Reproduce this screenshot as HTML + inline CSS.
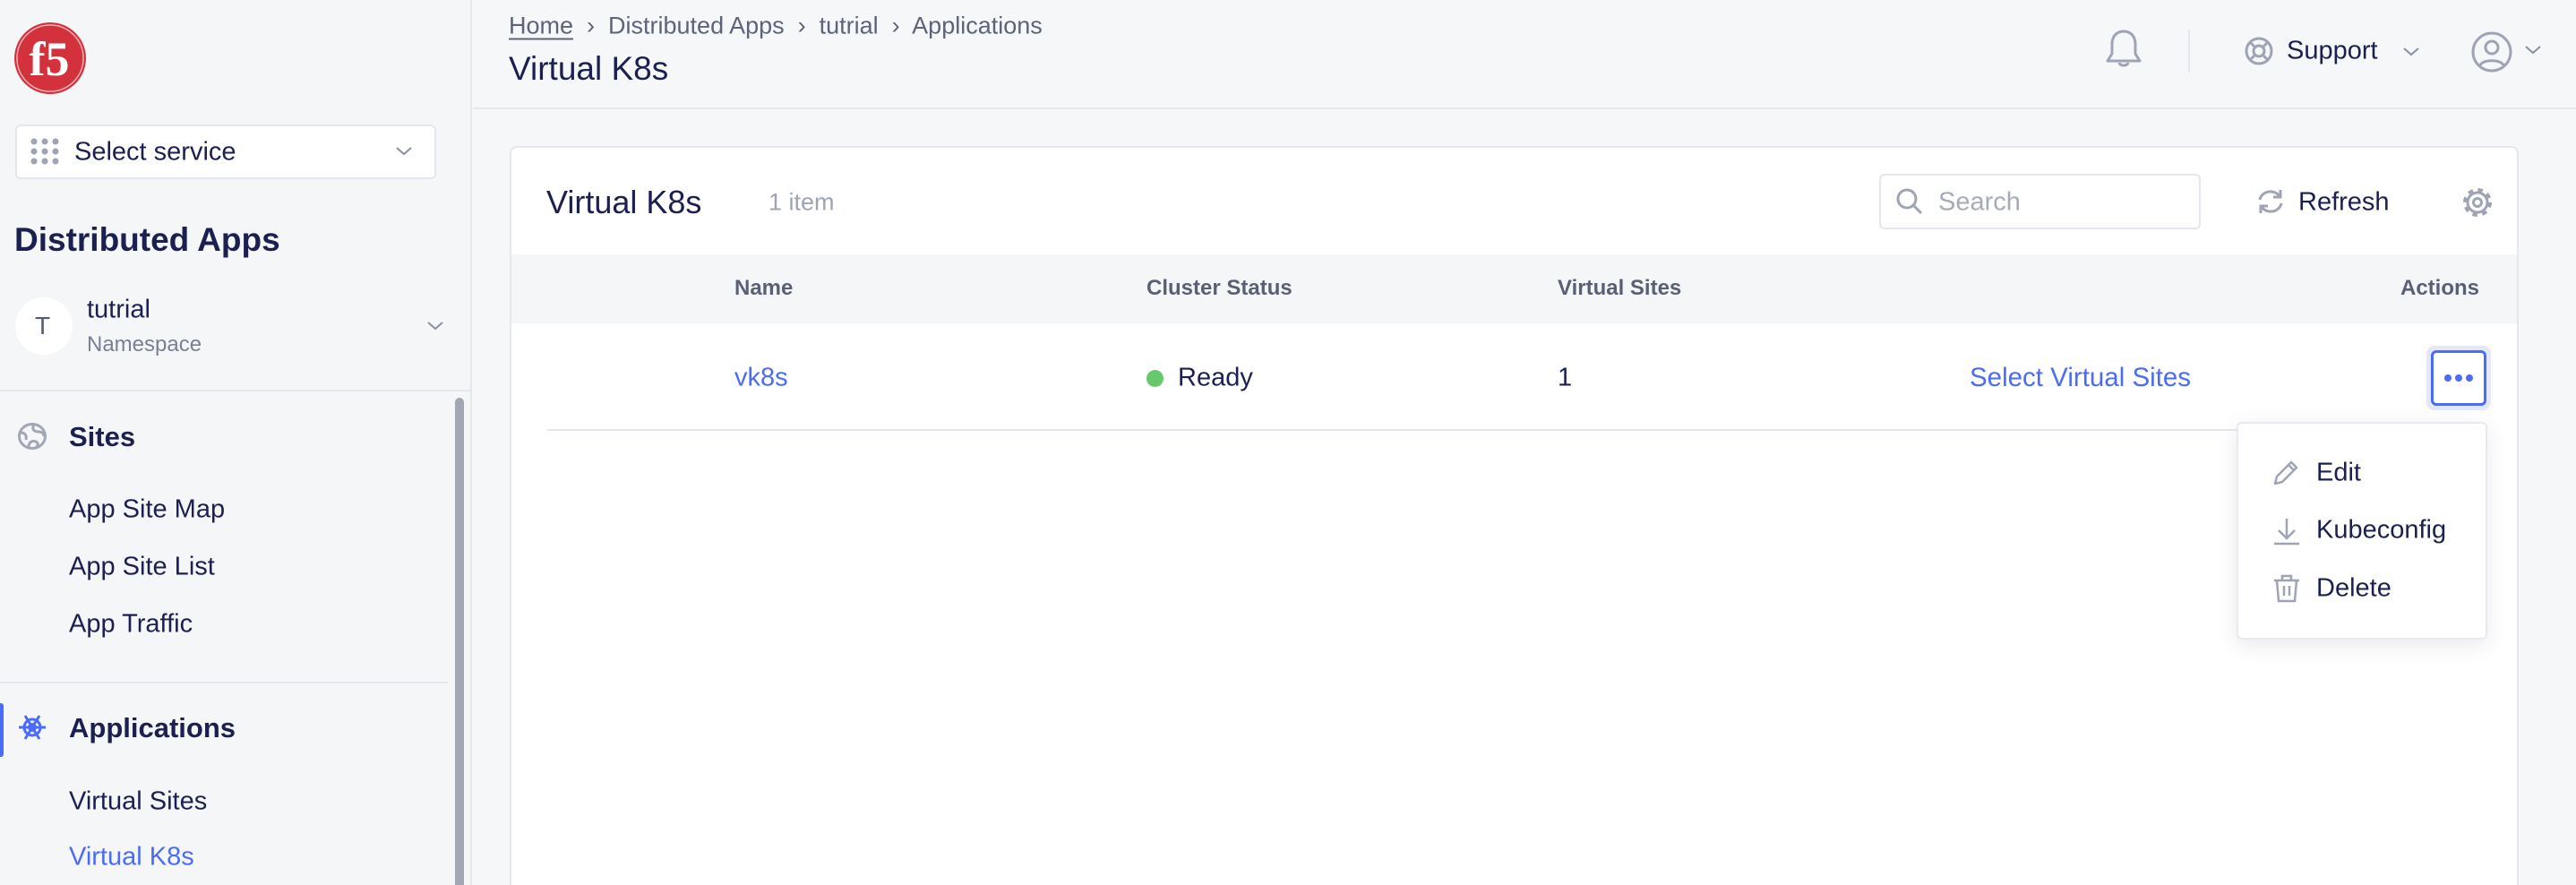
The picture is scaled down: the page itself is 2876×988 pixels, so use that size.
<!DOCTYPE html>
<html style="width:2876px;height:988px;overflow:hidden"><head><meta charset="utf-8"><style>
*{margin:0;padding:0;box-sizing:border-box}
body{width:2876px;height:988px;overflow:hidden;background:#f6f7f9;font-family:"Liberation Sans",sans-serif;color:#1b2050;position:relative}
.a{position:absolute;white-space:nowrap}
.vc{transform:translateY(-50%)}
svg{position:absolute;overflow:visible}
</style></head><body>
<!-- sidebar -->
<div class="a" style="left:0;top:0;width:527px;height:988px;background:#f5f6f8;border-right:2px solid #e6e8ee"></div>
<svg style="left:15px;top:24px" width="82" height="82" viewBox="0 0 82 82"><ellipse cx="41" cy="41" rx="40" ry="40" fill="#d3323c"/><ellipse cx="41" cy="41" rx="37" ry="37" fill="none" stroke="#fff" stroke-width="1.5" opacity=".6"/><text x="40" y="60" font-family="Liberation Serif" font-weight="bold" font-size="54" fill="#fff" text-anchor="middle">f5</text></svg>
<div class="a" style="left:17px;top:139px;width:470px;height:61px;background:#fff;border:2px solid #e4e7ee;border-radius:6px"></div>
<svg style="left:34px;top:154px" width="34" height="30"><g fill="#9ea4b4"><circle cx="4" cy="4" r="3.5"/><circle cx="16" cy="4" r="3.5"/><circle cx="28" cy="4" r="3.5"/><circle cx="4" cy="15" r="3.5"/><circle cx="16" cy="15" r="3.5"/><circle cx="28" cy="15" r="3.5"/><circle cx="4" cy="26" r="3.5"/><circle cx="16" cy="26" r="3.5"/><circle cx="28" cy="26" r="3.5"/></g></svg>
<div class="a vc" style="left:83px;top:170px;font-size:29px">Select service</div>
<svg style="left:442px;top:164px" width="18" height="10"><path d="M1 1l8 7 8-7" stroke="#8a90a2" stroke-width="2" fill="none"/></svg>
<div class="a vc" style="left:16px;top:268px;font-size:37px;font-weight:bold">Distributed Apps</div>
<div class="a" style="left:17px;top:332px;width:64px;height:64px;border-radius:50%;background:#fff"></div>
<div class="a vc" style="left:39px;top:364px;font-size:28px;color:#555b70">T</div>
<div class="a vc" style="left:97px;top:346px;font-size:29px">tutrial</div>
<div class="a vc" style="left:97px;top:385px;font-size:24px;color:#7a8094">Namespace</div>
<svg style="left:477px;top:359px" width="18" height="10"><path d="M1 1l8 7 8-7" stroke="#8a90a2" stroke-width="2" fill="none"/></svg>
<div class="a" style="left:0;top:435px;width:526px;height:2px;background:#e4e7ee"></div>
<div class="a" style="left:508px;top:444px;width:10px;height:560px;border-radius:5px;background:#a1a7b5"></div>
<svg style="left:20px;top:472px" width="32" height="30" viewBox="0 0 32 30"><ellipse cx="16" cy="15" rx="14.5" ry="13.5" stroke="#a1a7b5" stroke-width="3" fill="none"/><path d="M3 11c5 0 7 3 6 8M18 2c-3 5 0 8 5 8s6 3 6 5M12 27c0-5 4-8 8-6s2 6-1 7" stroke="#a1a7b5" stroke-width="3" fill="none"/></svg>
<div class="a vc" style="left:77px;top:488px;font-size:31px;font-weight:bold">Sites</div>
<div class="a vc" style="left:77px;top:569px;font-size:29px">App Site Map</div>
<div class="a vc" style="left:77px;top:633px;font-size:29px">App Site List</div>
<div class="a vc" style="left:77px;top:697px;font-size:29px">App Traffic</div>
<div class="a" style="left:0;top:761px;width:500px;height:2px;background:#e4e7ee"></div>
<div class="a" style="left:0;top:785px;width:4px;height:60px;background:#4a6cf7;border-radius:0 3px 3px 0"></div>
<svg style="left:20px;top:797px" width="32" height="30" viewBox="-16 -15 32 30"><g stroke="#4a6cf7" stroke-width="3" fill="none"><circle r="9"/><circle r="3.5"/><path d="M-15 0h30M-8 -13l16 26M8 -13l-16 26"/></g></svg>
<div class="a vc" style="left:77px;top:813px;font-size:31px;font-weight:bold">Applications</div>
<div class="a vc" style="left:77px;top:895px;font-size:29px">Virtual Sites</div>
<div class="a vc" style="left:77px;top:957px;font-size:29px;color:#4a6cf7">Virtual K8s</div>

<!-- header -->
<div class="a" style="left:528px;top:120px;width:2348px;height:2px;background:#e6e8ee"></div>
<div class="a vc" style="left:568px;top:29px;font-size:27px;color:#5d6378"><span style="text-decoration:underline;text-underline-offset:5px">Home</span> &nbsp;›&nbsp; Distributed Apps &nbsp;›&nbsp; tutrial &nbsp;›&nbsp; Applications</div>
<div class="a vc" style="left:568px;top:77px;font-size:37px">Virtual K8s</div>
<svg style="left:2350px;top:32px" width="42" height="52" viewBox="0 0 42 52"><path d="M21 3c-9 0-13 7-13 14v11l-5 8h36l-5-8V17c0-7-4-14-13-14zM16 38c1 4 9 4 10 0" stroke="#9ea4b4" stroke-width="3" fill="none" stroke-linejoin="round"/></svg>
<div class="a" style="left:2443px;top:33px;width:2px;height:48px;background:#e4e7ee"></div>
<svg style="left:2506px;top:41px" width="32" height="32" viewBox="0 0 32 32"><g stroke="#9ea4b4" stroke-width="3" fill="none"><circle cx="16" cy="16" r="14"/><circle cx="16" cy="16" r="6"/><path d="M6 6l6 6M26 6l-6 6M6 26l6-6M26 26l-6-6"/></g></svg>
<div class="a vc" style="left:2553px;top:57px;font-size:29px">Support</div>
<svg style="left:2683px;top:53px" width="18" height="10"><path d="M1 1l8 7 8-7" stroke="#8a90a2" stroke-width="2" fill="none"/></svg>
<svg style="left:2759px;top:35px" width="46" height="46" viewBox="0 0 46 46"><g stroke="#9ea4b4" stroke-width="3" fill="none"><circle cx="23" cy="23" r="21"/><circle cx="23" cy="18" r="7"/><path d="M10 38c2-7 24-7 26 0"/></g></svg>
<svg style="left:2819px;top:51px" width="18" height="10"><path d="M1 1l8 7 8-7" stroke="#8a90a2" stroke-width="2" fill="none"/></svg>

<!-- card -->
<div class="a" style="left:569px;top:163px;width:2243px;height:830px;background:#fff;border:2px solid #e6e8ee;border-bottom:none;border-radius:8px 8px 0 0"></div>
<div class="a vc" style="left:610px;top:226px;font-size:36px">Virtual K8s</div>
<div class="a vc" style="left:858px;top:226px;font-size:27px;color:#9ea4b4">1 item</div>
<div class="a" style="left:2098px;top:194px;width:359px;height:62px;border:2px solid #e4e7ee;border-radius:6px"></div>
<svg style="left:2117px;top:210px" width="30" height="30"><circle cx="12" cy="12" r="10" stroke="#9ea4b4" stroke-width="3" fill="none"/><path d="M19 19l9 9" stroke="#9ea4b4" stroke-width="3"/></svg>
<div class="a vc" style="left:2164px;top:226px;font-size:29px;color:#a6abb9">Search</div>
<svg style="left:2520px;top:210px" width="30" height="30" viewBox="0 0 30 30"><g stroke="#9ea4b4" stroke-width="3" fill="none"><path d="M3 13a12 11 0 0 1 22-4M27 17a12 11 0 0 1-22 4"/><path d="M26 2v8h-8M4 28v-8h8"/></g></svg>
<div class="a vc" style="left:2566px;top:226px;font-size:29px">Refresh</div>
<svg style="left:2749px;top:209px" width="34" height="34" viewBox="-17 -17 34 34"><circle r="13" fill="none" stroke="#9ea4b4" stroke-width="6" stroke-dasharray="5.1 5.1"/><circle r="11" fill="#fff" stroke="#9ea4b4" stroke-width="3"/><circle r="4.5" fill="none" stroke="#9ea4b4" stroke-width="3"/></svg>
<div class="a" style="left:571px;top:284px;width:2239px;height:77px;background:#f5f6f8"></div>
<div class="a vc" style="left:820px;top:322px;font-size:24px;font-weight:bold;color:#5a6074">Name</div>
<div class="a vc" style="left:1280px;top:322px;font-size:24px;font-weight:bold;color:#5a6074">Cluster Status</div>
<div class="a vc" style="left:1739px;top:322px;font-size:24px;font-weight:bold;color:#5a6074">Virtual Sites</div>
<div class="a vc" style="right:108px;top:322px;font-size:24px;font-weight:bold;color:#5a6074">Actions</div>
<div class="a vc" style="left:820px;top:422px;font-size:29px;color:#4a6cf7">vk8s</div>
<div class="a" style="left:1280px;top:413px;width:19px;height:19px;border-radius:50%;background:#66c96b"></div>
<div class="a vc" style="left:1315px;top:422px;font-size:29px">Ready</div>
<div class="a vc" style="left:1739px;top:422px;font-size:29px">1</div>
<div class="a vc" style="left:2199px;top:422px;font-size:29.5px;color:#4a6cf7">Select Virtual Sites</div>
<div class="a" style="left:611px;top:479px;width:2157px;height:2px;background:#e6e8ee"></div>
<div class="a" style="left:2709px;top:386px;width:72px;height:72px;border-radius:9px;background:#e3e8fd"></div>
<div class="a" style="left:2714px;top:391px;width:62px;height:62px;border:3px solid #4a6cf7;border-radius:6px;background:#fff"></div>
<svg style="left:2729px;top:416px" width="32" height="12"><g fill="#4a6cf7"><circle cx="4" cy="6" r="4"/><circle cx="16" cy="6" r="4"/><circle cx="28" cy="6" r="4"/></g></svg>
<!-- dropdown -->
<div class="a" style="left:2497px;top:471px;width:280px;height:243px;background:#fff;border:2px solid #e8eaf0;border-radius:6px;box-shadow:0 6px 24px rgba(30,40,80,.10)"></div>
<svg style="left:2538px;top:512px" width="30" height="30" viewBox="0 0 30 30"><path d="M2 28l2-8L20 4l6 6-16 16z M17 7l6 6" stroke="#9ea4b4" stroke-width="2.5" fill="none" stroke-linejoin="round"/></svg>
<div class="a vc" style="left:2586px;top:528px;font-size:29px">Edit</div>
<svg style="left:2538px;top:577px" width="30" height="32" viewBox="0 0 30 32"><path d="M15 2v22M6 15l9 9 9-9M1 30h28" stroke="#9ea4b4" stroke-width="2.5" fill="none"/></svg>
<div class="a vc" style="left:2586px;top:592px;font-size:29px">Kubeconfig</div>
<svg style="left:2538px;top:641px" width="30" height="32" viewBox="0 0 30 32"><path d="M1 7h28M10 7V2h10v5M4 7l2 23h18l2-23M12 13v11M18 13v11" stroke="#9ea4b4" stroke-width="2.5" fill="none"/></svg>
<div class="a vc" style="left:2586px;top:657px;font-size:29px">Delete</div>
</body></html>
